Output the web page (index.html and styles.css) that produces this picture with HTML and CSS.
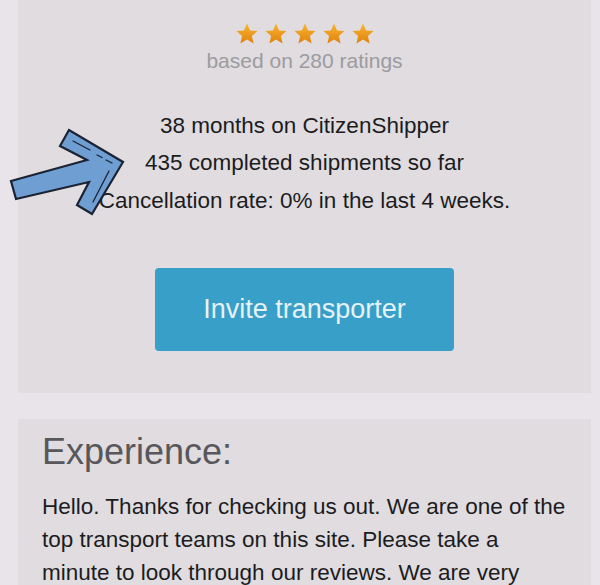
FILE: index.html
```html
<!DOCTYPE html>
<html lang="en">
<head>
<meta charset="utf-8">
<title>Transporter profile</title>
<link rel="stylesheet" href="styles.css">
</head>
<body>
<main class="page">
  <section class="card summary">
    <div class="stars" aria-label="5 stars">
      <svg class="star" viewBox="0 0 24 24"><defs><linearGradient id="sg" x1="0" y1="0" x2="0" y2="1"><stop offset="0" stop-color="#f9b531"/><stop offset="1" stop-color="#e0820c"/></linearGradient></defs><path d="M12 1.5l3.1 7 7.4.6-5.6 4.9 1.7 7.4L12 17.5l-6.6 3.9 1.7-7.4L1.5 9.1l7.4-.6z" fill="url(#sg)"/></svg>
      <svg class="star" viewBox="0 0 24 24"><path d="M12 1.5l3.1 7 7.4.6-5.6 4.9 1.7 7.4L12 17.5l-6.6 3.9 1.7-7.4L1.5 9.1l7.4-.6z" fill="url(#sg)"/></svg>
      <svg class="star" viewBox="0 0 24 24"><path d="M12 1.5l3.1 7 7.4.6-5.6 4.9 1.7 7.4L12 17.5l-6.6 3.9 1.7-7.4L1.5 9.1l7.4-.6z" fill="url(#sg)"/></svg>
      <svg class="star" viewBox="0 0 24 24"><path d="M12 1.5l3.1 7 7.4.6-5.6 4.9 1.7 7.4L12 17.5l-6.6 3.9 1.7-7.4L1.5 9.1l7.4-.6z" fill="url(#sg)"/></svg>
      <svg class="star" viewBox="0 0 24 24"><path d="M12 1.5l3.1 7 7.4.6-5.6 4.9 1.7 7.4L12 17.5l-6.6 3.9 1.7-7.4L1.5 9.1l7.4-.6z" fill="url(#sg)"/></svg>
    </div>
    <p class="rating">based on 280 ratings</p>
    <ul class="stats">
      <li>38 months on CitizenShipper</li>
      <li>435 completed shipments so far</li>
      <li>Cancellation rate: 0% in the last 4 weeks.</li>
    </ul>
    <button class="invite" type="button">Invite transporter</button>
    <svg class="arrow" viewBox="0 0 130 230" aria-hidden="true">
      <polygon points="11,181 87,160 60,146 69,130 123,162 92,214 77,205 89,182 16,199" fill="#6f9ed3" stroke="#1b2232" stroke-width="2.2" stroke-linejoin="miter"/>
      <g stroke="#1b2232" stroke-width="1.3" stroke-linecap="round">
        <line x1="73" y1="141" x2="90" y2="150"/>
        <line x1="97" y1="155" x2="102" y2="157.5"/>
        <line x1="106" y1="160" x2="112" y2="163"/>
        <line x1="109" y1="171" x2="93" y2="202"/>
      </g>
    </svg>
  </section>
  <section class="card experience">
    <h2 class="heading">Experience:</h2>
    <p class="bio">Hello. Thanks for checking us out. We are one of the top transport teams on this site. Please take a minute to look through our reviews. We are very</p>
  </section>
</main>
</body>
</html>
```

FILE: styles.css
```css
html, body {
  margin: 0;
  padding: 0;
}

body {
  background: #e8e4ea;
  font-family: "Liberation Sans", Arial, sans-serif;
  color: #1c1c1e;
  height: 585px;
  overflow: hidden;
}

.page {
  display: flex;
  flex-direction: column;
  gap: 26px;
  padding: 0 9px 0 18px;
}

.card {
  background: #e0dce0;
}

.summary {
  position: relative;
  display: flex;
  flex-direction: column;
  align-items: center;
  padding: 22px 0 42px;
}

.stars {
  display: flex;
  gap: 5px;
  height: 24px;
}

.star {
  width: 24px;
  height: 24px;
}

.rating {
  margin: 3px 0 0;
  font-size: 21px;
  line-height: 24px;
  color: #9c9b9f;
}

.stats {
  list-style: none;
  margin: 33.5px 0 0;
  padding: 0;
  text-align: center;
  font-size: 22.5px;
  line-height: 37.5px;
  color: #1c1c1e;
}

.invite {
  margin-top: 48.5px;
  width: 299px;
  height: 83px;
  border: 0;
  border-radius: 4px;
  background: #38a0c8;
  color: #e6f2f7;
  font-family: "Liberation Sans", Arial, sans-serif;
  font-size: 27px;
}

.arrow {
  position: absolute;
  left: -18px;
  top: 0;
  width: 130px;
  height: 230px;
}

.experience {
  padding: 12px 24px 0;
}

.heading {
  margin: 0;
  font-size: 36px;
  line-height: 42px;
  font-weight: normal;
  color: #58575c;
}

.bio {
  margin: 17.5px 0 0;
  font-size: 22.5px;
  line-height: 33px;
  color: #1c1c1e;
}
```
